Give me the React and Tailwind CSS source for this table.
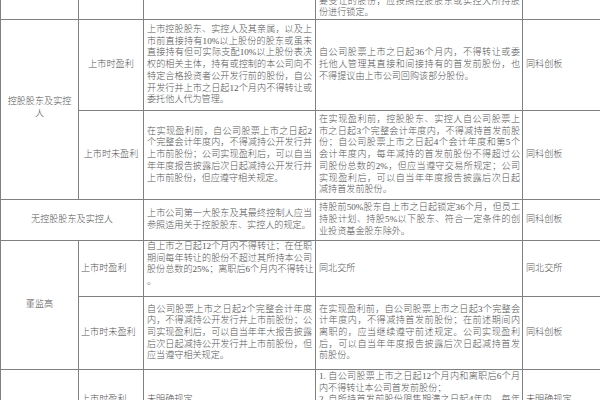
const cell = "border border-[#808080] align-middle";

// one line per div; every line but the last of a paragraph is stretched to the cell width
const Para = ({ lines, className = "" }) => (
  <div className={className}>
    {lines.map((line, i) => (
      <div
        key={i}
        className={
          i < lines.length - 1
            ? "whitespace-nowrap text-justify [text-align-last:justify]"
            : "whitespace-nowrap"
        }
      >
        {line}
      </div>
    ))}
  </div>
);

const rows = {
  top: ["要受让的股份，应按照控股股东或实控人所持股", "份进行锁定。"],
  ctrlProfitA: [
    "上市控股股东、实控人及其亲属，以及上",
    "市前直接持有10%以上股份的股东或虽未",
    "直接持有但可实际支配10%以上股份表决",
    "权的相关主体，持有或控制的本公司向不",
    "特定合格投资者公开发行前的股份，自公",
    "开发行并上市之日起12个月内不得转让或",
    "委托他人代为管理。",
  ],
  ctrlProfitB: [
    "自公司股票上市之日起36个月内，不得转让或委",
    "托他人管理其直接和间接持有的首发前股份，也",
    "不得提议由上市公司回购该部分股份。",
  ],
  ctrlLossA: [
    "在实现盈利前，自公司股票上市之日起2",
    "个完整会计年度内，不得减持公开发行并",
    "上市前股份；公司实现盈利后，可以自当",
    "年年度报告披露后次日起减持公开发行并",
    "上市前股份，但应遵守相关规定。",
  ],
  ctrlLossB: [
    "在实现盈利前，控股股东、实控人自公司股票上",
    "市之日起3个完整会计年度内，不得减持首发前股",
    "份；自公司股票上市之日起4个会计年度和第5个",
    "会计年度内，每年减持的首发前股份不得超过公",
    "司股份总数的2%，但应当遵守交易所规定；公司",
    "实现盈利后，可以自当年年度报告披露后次日起",
    "减持首发前股份。",
  ],
  noCtrlA: [
    "上市公司第一大股东及其最终控制人应当",
    "参照适用关于控股股东、实控人的规定。",
  ],
  noCtrlB: [
    "持股前50%股东自上市之日起锁定36个月，但员工",
    "持股计划、持股5%以下股东、符合一定条件的创",
    "业投资基金股东除外。",
  ],
  dirProfitA: [
    "自上市之日起12个月内不得转让；在任职",
    "期间每年转让的股份不超过其所持本公司",
    "股份总数的25%；离职后6个月内不得转让",
    "。",
  ],
  dirLossA: [
    "自公司股票上市之日起2个完整会计年度",
    "内，不得减持公开发行并上市前股份；公",
    "司实现盈利后，可以自当年年大报告披露",
    "后次日起减持公开发行并上市前股份，但",
    "应当遵守相关规定。",
  ],
  dirLossB: [
    "在实现盈利前，自公司股票上市之日起3个完整会",
    "计年度内，不得减持首发前股份；在前述期间内",
    "离职的，应当继续遵守前述规定。公司实现盈利",
    "后，可以自当年年度报告披露后次日起减持首发",
    "前股份。",
  ],
};

export default function App() {
  return (
    <div
      className="w-[600px] h-[400px] overflow-hidden bg-white text-[#555] text-[9.1px] leading-[11.7px] font-light"
      style={{ fontFamily: '"Liberation Serif", "Noto Sans CJK SC", serif' }}
    >
      <table className="table-fixed border-collapse -mt-[12px] w-[600px]">
        <colgroup>
          <col className="w-[78px]" />
          <col className="w-[65px]" />
          <col className="w-[172px]" />
          <col className="w-[207px]" />
          <col className="w-[78px]" />
        </colgroup>
        <tbody>
          <tr className="h-[31px]">
            <td className={cell} />
            <td className={cell} />
            <td className={cell} />
            <td className={`${cell} !align-bottom pl-[3px] pr-[2px]`}>
              <Para lines={rows.top} />
            </td>
            <td className={cell} />
          </tr>

          <tr className="h-[91px]">
            <td rowSpan={2} className={`${cell} text-center px-1 pb-[4px]`}>
              <div>控股股东及实控</div>
              <div>人</div>
            </td>
            <td className={`${cell} text-center`}>上市时盈利</td>
            <td className={`${cell} px-[3px]`}>
              <Para lines={rows.ctrlProfitA} />
            </td>
            <td className={`${cell} pl-[3px] pr-[2px]`}>
              <Para lines={rows.ctrlProfitB} />
            </td>
            <td className={`${cell} pl-[3px]`}>同科创板</td>
          </tr>

          <tr className="h-[89px]">
            <td className={`${cell} text-center`}>上市时未盈利</td>
            <td className={`${cell} px-[3px]`}>
              <Para lines={rows.ctrlLossA} />
            </td>
            <td className={`${cell} pl-[3px] pr-[2px]`}>
              <Para lines={rows.ctrlLossB} />
            </td>
            <td className={`${cell} pl-[3px]`}>同科创板</td>
          </tr>

          <tr className="h-[41px]">
            <td colSpan={2} className={`${cell} text-center`}>
              无控股股东及实控人
            </td>
            <td className={`${cell} px-[3px]`}>
              <Para lines={rows.noCtrlA} />
            </td>
            <td className={`${cell} pl-[3px] pr-[2px]`}>
              <Para lines={rows.noCtrlB} />
            </td>
            <td className={`${cell} pl-[3px]`}>同科创板</td>
          </tr>

          <tr className="h-[52px]">
            <td rowSpan={2} className={`${cell} text-center`}>
              董监高
            </td>
            <td className={`${cell} pl-[2px]`}>上市时盈利</td>
            <td className={`${cell} px-[3px] pb-[8px]`}>
              <Para lines={rows.dirProfitA} />
            </td>
            <td className={`${cell} pl-[3px]`}>同北交所</td>
            <td className={`${cell} pl-[3px]`}>同北交所</td>
          </tr>

          <tr className="h-[73px]">
            <td className={`${cell} pl-[2px]`}>上市时未盈利</td>
            <td className={`${cell} px-[3px]`}>
              <Para lines={rows.dirLossA} />
            </td>
            <td className={`${cell} pl-[3px] pr-[2px]`}>
              <Para lines={rows.dirLossB} />
            </td>
            <td className={`${cell} pl-[3px]`}>同科创板</td>
          </tr>

          <tr className="h-[62px]">
            <td rowSpan={2} className={`${cell} text-center`}>
              核心技术人员
            </td>
            <td className={`${cell} pl-[2px]`}>上市时盈利</td>
            <td className={`${cell} px-[3px]`}>未明确规定</td>
            <td className={`${cell} pl-[3px] pr-[2px]`}>
              <Para lines={["1. 自公司股票上市之日起12个月内和离职后6个月", "内不得转让本公司首发前股份；"]} />
              <Para
                lines={[
                  "2. 自所持首发前股份限售期满之日起4年内，每年",
                  "转让的首发前股份不得超过上市时所持公司首发",
                  "前股份总数的25%，减持比例可以累积使用。",
                ]}
              />
            </td>
            <td className={`${cell} pl-[3px]`}>未明确规定</td>
          </tr>

          <tr className="h-[160px]">
            <td className={`${cell} pl-[2px]`}>上市时未盈利</td>
            <td className={`${cell} px-[3px]`}>未明确规定</td>
            <td className={`${cell} pl-[3px] pr-[2px]`}>未明确规定</td>
            <td className={`${cell} pl-[3px]`}>未明确规定</td>
          </tr>
        </tbody>
      </table>
    </div>
  );
}
